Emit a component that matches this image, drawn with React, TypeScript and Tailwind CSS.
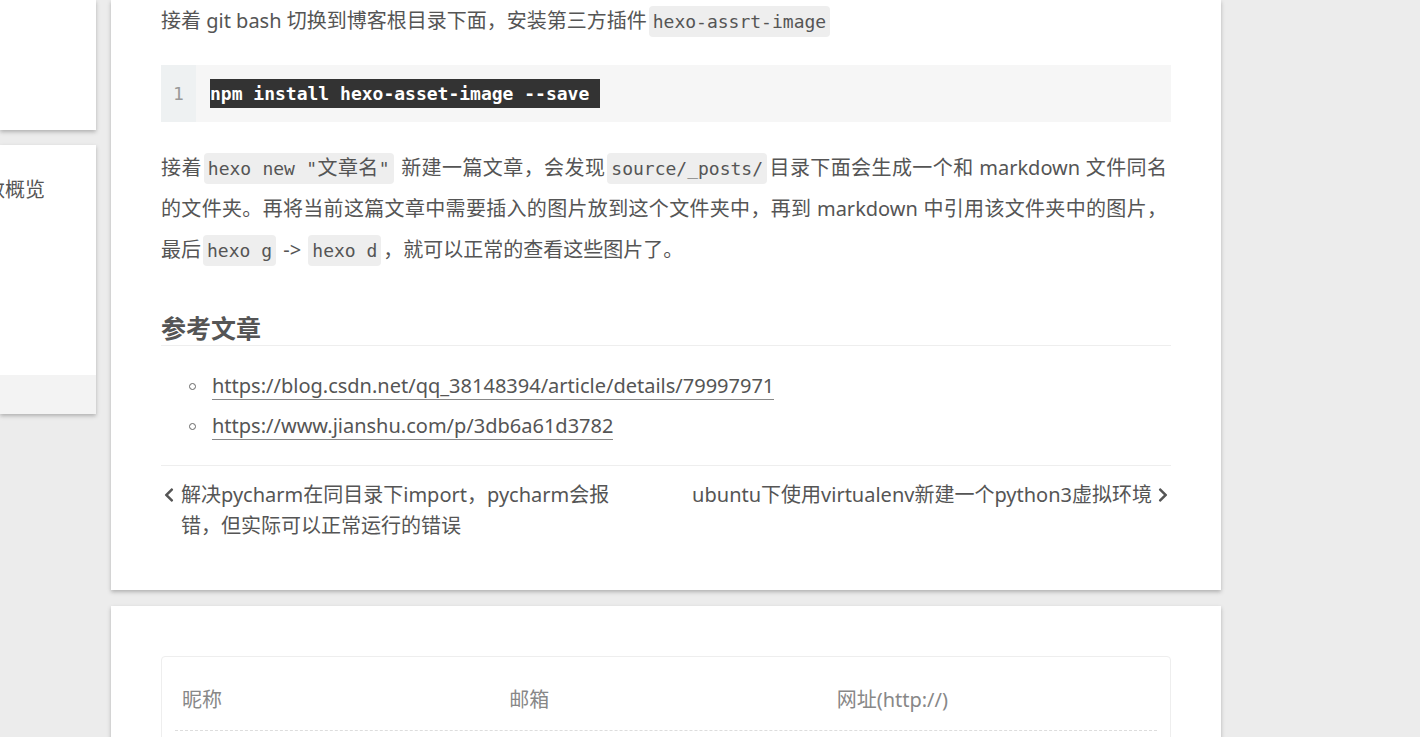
const body = { fontFamily: '"Noto Sans", "Noto Sans CJK SC", sans-serif' };
const mono = { fontFamily: '"DejaVu Sans Mono", "Noto Sans CJK SC", monospace' };

function Code({ children }: { children: React.ReactNode }) {
  return (
    <code style={mono} className="mx-[2px] rounded-[4px] bg-[#eee] px-[4px] py-[5px] text-[18px] leading-none text-[#555]">
      {children}
    </code>
  );
}

function Chevron({ dir }: { dir: "left" | "right" }) {
  return (
    <svg viewBox="0 0 320 512" className={`h-[16px] w-[12px] fill-[#555] ${dir === "right" ? "rotate-180" : ""}`}>
      <path d="M34.52 239.03L228.87 44.69c9.37-9.37 24.57-9.37 33.94 0l22.67 22.67c9.36 9.36 9.37 24.52.04 33.9L131.49 256l154.02 154.75c9.34 9.38 9.32 24.54-.04 33.9l-22.67 22.67c-9.37 9.37-24.57 9.37-33.94 0L34.52 272.97c-9.37-9.37-9.37-24.57 0-33.94z" />
    </svg>
  );
}

const links = [
  "https://blog.csdn.net/qq_38148394/article/details/79997971",
  "https://www.jianshu.com/p/3db6a61d3782",
];

export default function App() {
  return (
    <div style={body} className="flex h-[737px] w-[1420px] gap-[15px] overflow-hidden bg-[#ececec] text-[#555]">
      {/* sidebar, cut off on the left */}
      <aside className="w-[96px] shrink-0">
        <div className="h-[130px] bg-white shadow-[0_2px_4px_rgba(0,0,0,0.25)]" />
        <div className="mt-[15px] flex h-[269px] flex-col overflow-hidden bg-white shadow-[0_2px_4px_rgba(0,0,0,0.25)]">
          <div className="flex-1 pt-[30px]">
            <p className="ml-[-15px] whitespace-nowrap text-[20px] leading-[30px]">数概览</p>
          </div>
          <div className="h-[39px] bg-[#f3f3f3]" />
        </div>
      </aside>

      <main className="w-[1110px] shrink-0">
        <article className="bg-white px-[50px] pb-[49px] text-[20px] shadow-[0_2px_4px_rgba(0,0,0,0.25)]">
          <p className="leading-[41px]">
            接着 git bash 切换到博客根目录下面，安装第三方插件<Code>hexo-assrt-image</Code>
          </p>

          <div className="mt-[24px] flex h-[57px] bg-[#f6f6f6]">
            <div className="flex w-[35px] items-center justify-center bg-[#eef1f2] text-[18px] text-[#999]" style={mono}>
              1
            </div>
            <div className="flex items-center pl-[14px]">
              <span style={mono} className="whitespace-pre bg-[#333] py-[1px] text-[18px] font-bold leading-[27px] text-white">
                npm install hexo-asset-image --save{" "}
              </span>
            </div>
          </div>

          <p className="mt-[25px] pr-[4px] text-justify leading-[41px]">
            接着<Code>hexo new "<span className="text-[20px]">文章名</span>"</Code> 新建一篇文章，会发现<Code>source/_posts/</Code>目录下面会生成一个和 markdown 文件同名的文件夹。再将当前这篇文章中需要插入的图片放到这个文件夹中，再到 markdown 中引用该文件夹中的图片，最后<Code>hexo g</Code> -&gt; <Code>hexo d</Code>，就可以正常的查看这些图片了。
          </p>

          <h2 className="mt-[41px] border-b border-[#eee] text-[25px] font-bold leading-[34px]">参考文章</h2>

          <ul className="mt-[20px]">
            {links.map((l) => (
              <li key={l} className="flex h-[40px] items-center">
                <span className="ml-[28px] h-[7px] w-[7px] rounded-full border border-[#666]" />
                <a className="ml-[16px] border-b border-[#888] leading-[26px] text-[#555]">{l}</a>
              </li>
            ))}
          </ul>

          <div className="mt-[19px] border-t border-[#eee] pt-[13px]">
            <div className="flex justify-between leading-[31px]">
              <div className="relative w-[460px] pl-[20px]">
                <span className="absolute left-[2px] top-[8px]">
                  <Chevron dir="left" />
                </span>
                解决pycharm在同目录下import，pycharm会报错，但实际可以正常运行的错误
              </div>
              <div className="relative w-[500px] whitespace-nowrap pr-[19px] text-right">
                ubuntu下使用virtualenv新建一个python3虚拟环境
                <span className="absolute right-[2px] top-[8px]">
                  <Chevron dir="right" />
                </span>
              </div>
            </div>
          </div>
        </article>

        <section className="mt-[16px] h-[200px] bg-white px-[50px] pt-[50px] shadow-[0_2px_4px_rgba(0,0,0,0.25)]">
          <div className="h-[120px] rounded-[4px] border border-[#eee] px-[13px] pt-[13px]">
            <div className="grid grid-cols-3 border-b border-dashed border-[#ddd] text-[20px] text-[#888]">
              {["昵称", "邮箱", "网址(http://)"].map((t) => (
                <div key={t} className="flex h-[60px] items-center pl-[7px]">
                  {t}
                </div>
              ))}
            </div>
          </div>
        </section>
      </main>
    </div>
  );
}
